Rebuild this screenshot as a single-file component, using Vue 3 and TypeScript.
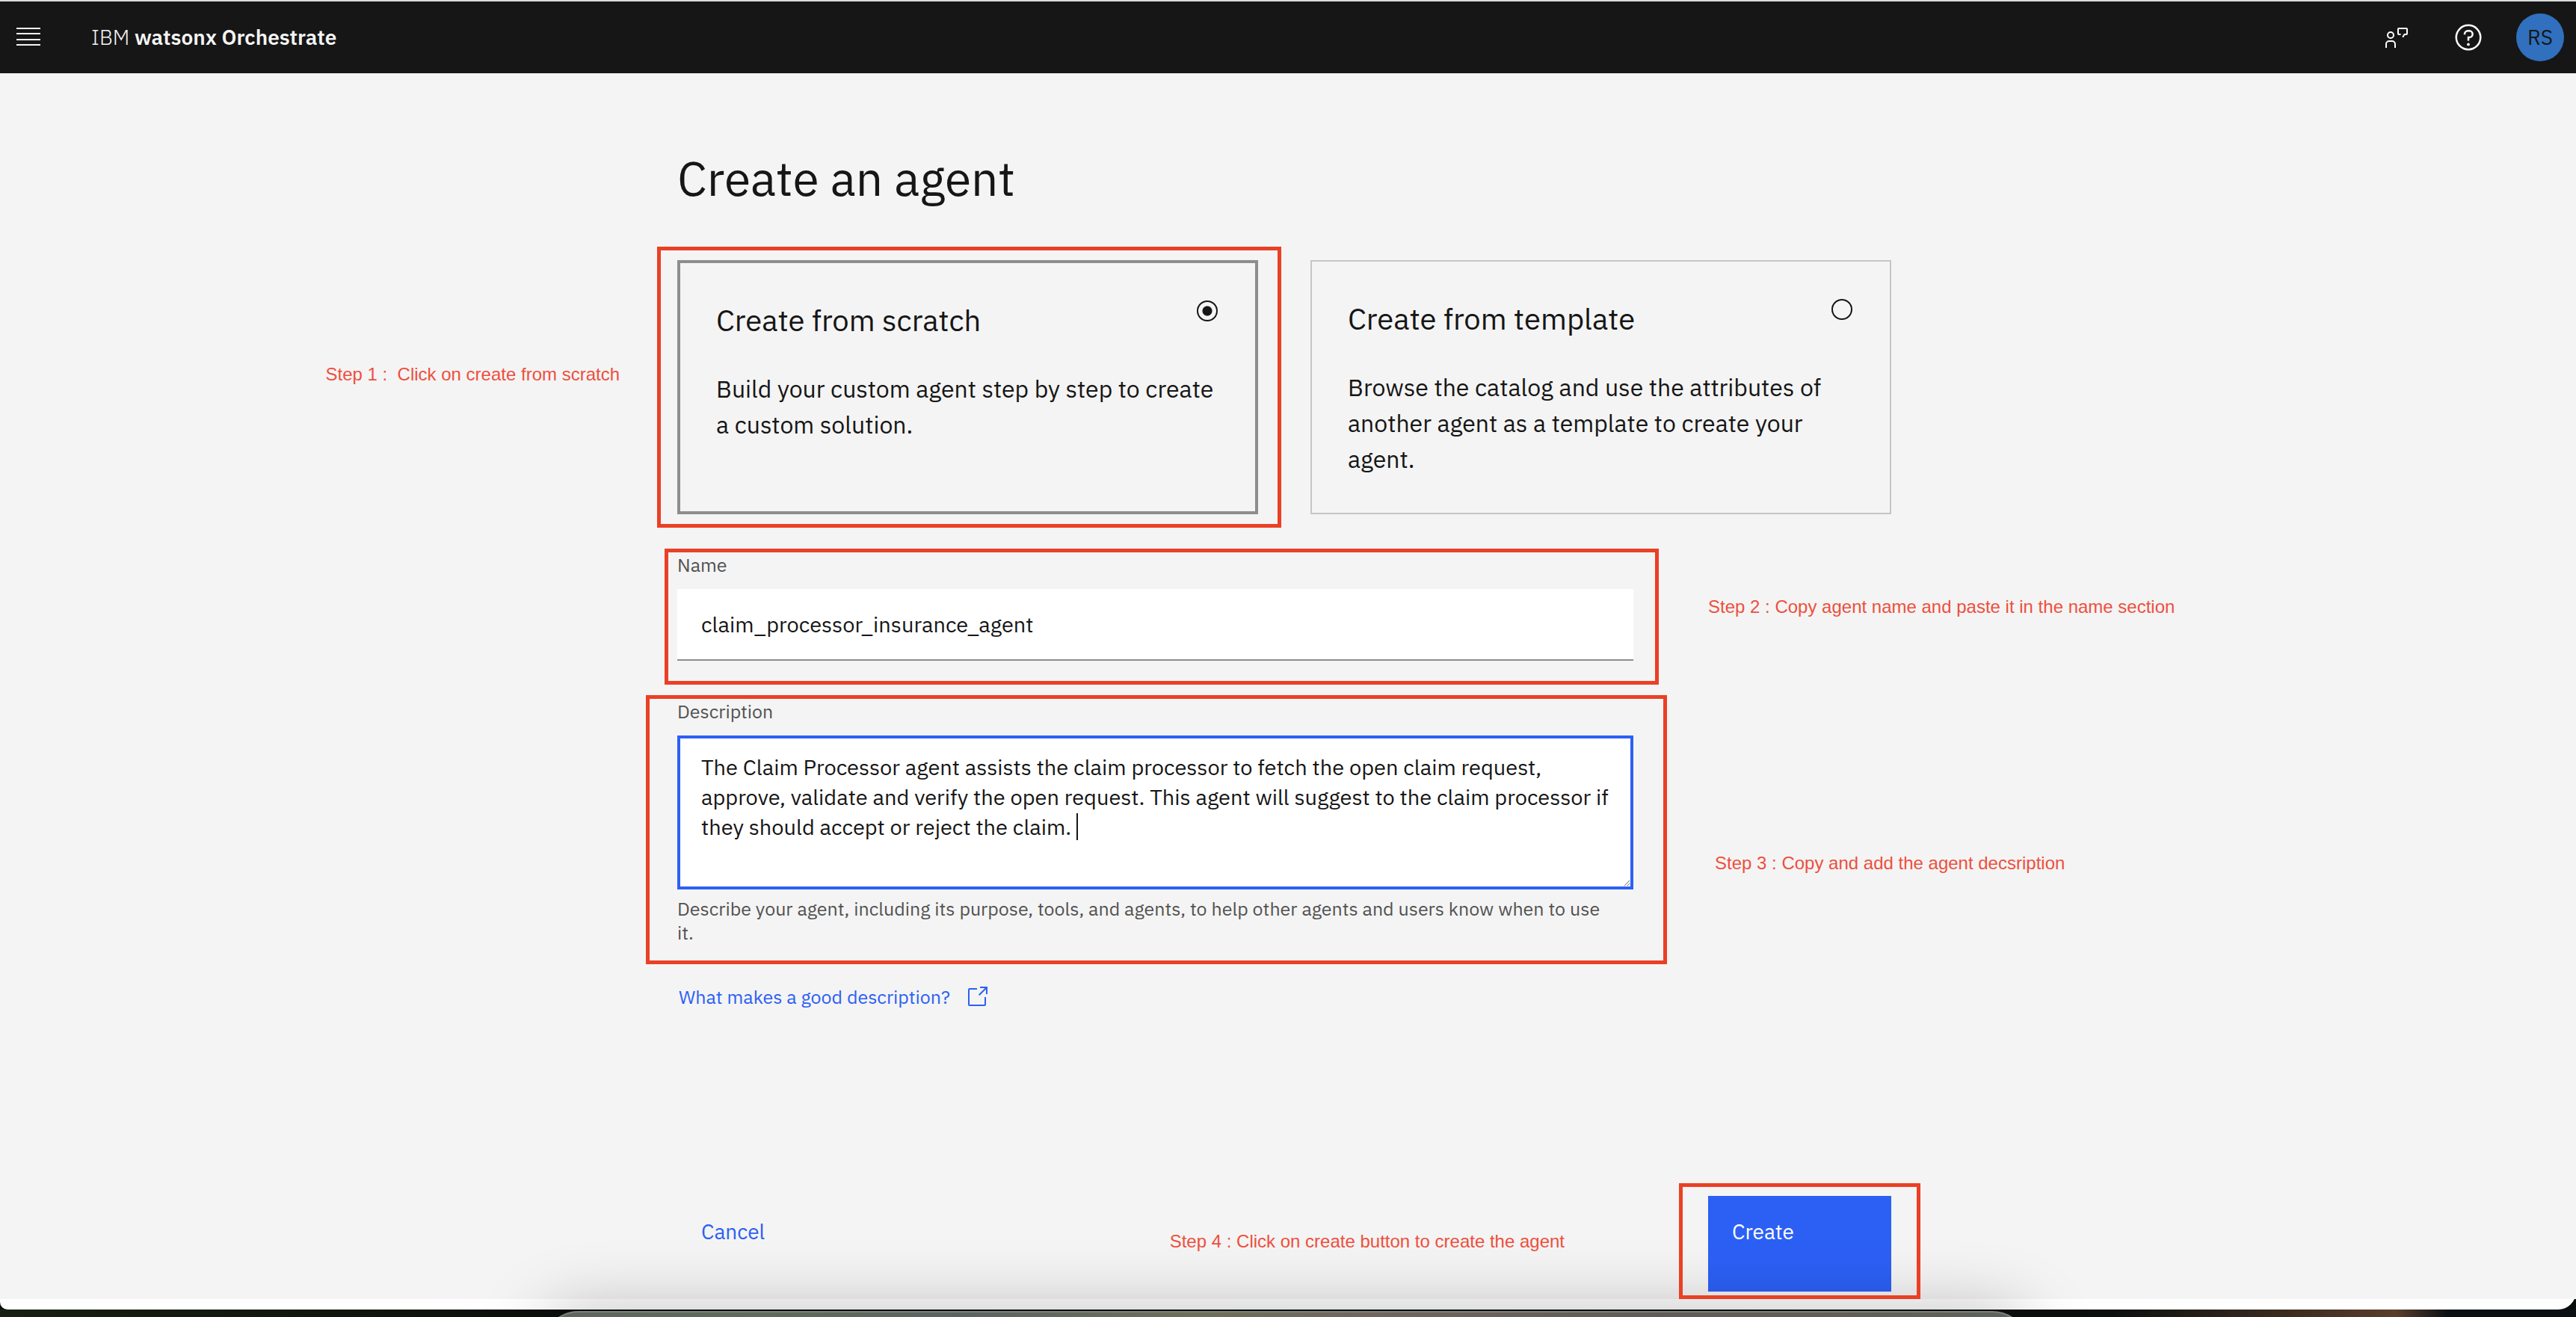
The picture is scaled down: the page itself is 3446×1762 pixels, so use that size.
<script setup lang="ts">
import { ref } from 'vue'

interface StartOption {
  id: string
  title: string
  text: string
}

const options: StartOption[] = [
  {
    id: 'scratch',
    title: 'Create from scratch',
    text: 'Build your custom agent step by step to create a custom solution.',
  },
  {
    id: 'template',
    title: 'Create from template',
    text: 'Browse the catalog and use the attributes of another agent as a template to create your agent.',
  },
]

const start = ref('scratch')
const agentName = ref('claim_processor_insurance_agent')
const description = ref(
  'The Claim Processor agent assists the claim processor to fetch the open claim request, approve, validate and verify the open request. This agent will suggest to the claim processor if they should accept or reject the claim. ',
)
</script>

<template>
  <div class="desktop">
    <div class="window">
      <header class="topbar">
        <button class="icon-button" type="button" aria-label="Menu">
          <svg width="32" height="32" viewBox="0 0 32 32" fill="#f4f4f4">
            <path d="M0 3h32v2H0zM0 10h32v2H0zM0 18h32v2H0zM0 25h32v2H0z" />
          </svg>
        </button>
        <a class="brand" href="#">IBM <b>watsonx Orchestrate</b></a>
        <div class="tools">
          <button class="icon-button" type="button" aria-label="Feedback">
            <svg width="32" height="32" viewBox="0 0 32 32" fill="none" stroke="#fff" stroke-width="2">
              <circle cx="8" cy="13" r="4" />
              <path d="M2 30v-5a4 4 0 0 1 4-4h4a4 4 0 0 1 4 4v5" />
              <path d="M21.5 12H19a1 1 0 0 1-1-1V5a1 1 0 0 1 1-1h10a1 1 0 0 1 1 1v6a1 1 0 0 1-1 1h-2.500l-2.300 3.800" />
            </svg>
          </button>
          <button class="icon-button" type="button" aria-label="Help">
            <svg width="40" height="40" viewBox="0 0 32 32" fill="#fff">
              <path d="M16,2A14,14,0,1,0,30,16,14,14,0,0,0,16,2Zm0,26A12,12,0,1,1,28,16,12,12,0,0,1,16,28Z" />
              <circle cx="16" cy="23.5" r="1.5" />
              <path d="M17,8H15.5A4.49,4.49,0,0,0,11,12.5V13h2v-.5A2.5,2.5,0,0,1,15.5,10H17a2.5,2.5,0,0,1,0,5H15v4.5h2V17a4.5,4.5,0,0,0,0-9Z" />
            </svg>
          </button>
          <button class="avatar" type="button">RS</button>
        </div>
      </header>

      <main class="page">
        <form class="content" @submit.prevent>
          <h1>Create an agent</h1>

          <div class="cards">
            <div v-for="option in options" :key="option.id" class="card-slot">
              <label class="card" :class="{ selected: start === option.id }">
                <span class="card-head">
                  <span class="card-title">{{ option.title }}</span>
                  <input v-model="start" type="radio" name="start" :value="option.id" />
                </span>
                <span class="card-text">{{ option.text }}</span>
              </label>
              <template v-if="option.id === 'scratch'">
                <span class="outline outline-card"></span>
                <span class="note note-1">Step 1 :&nbsp; Click on create from scratch</span>
              </template>
            </div>
          </div>

          <div class="field">
            <label for="agent-name">Name</label>
            <input id="agent-name" v-model="agentName" type="text" />
            <span class="outline outline-name"></span>
            <span class="note note-2">Step 2 : Copy agent name and paste it in the name section</span>
          </div>

          <div class="field">
            <label for="agent-description">Description</label>
            <div class="area">
              <textarea id="agent-description" v-model="description"></textarea>
              <span class="caret"></span>
            </div>
            <p class="helper">
              Describe your agent, including its purpose, tools, and agents, to help other agents and users know when to use it.
            </p>
            <span class="outline outline-description"></span>
            <span class="note note-3">Step 3 : Copy and add the agent decsription</span>
          </div>

          <a class="more" href="#">
            What makes a good description?
            <svg width="32" height="32" viewBox="0 0 32 32" fill="currentColor">
              <path d="M26,28H6a2,2,0,0,1-2-2V6A2,2,0,0,1,6,4H16V6H6V26H26V16h2V26A2,2,0,0,1,26,28Z" />
              <path d="M20 2v2h6.586L18 12.586 19.414 14 28 5.414V12h2V2z" />
            </svg>
          </a>

          <div class="actions">
            <button class="cancel" type="button">Cancel</button>
            <div class="create-slot">
              <button class="create" type="submit">Create</button>
              <span class="outline outline-create"></span>
              <span class="note note-4">Step 4 : Click on create button to create the agent</span>
            </div>
          </div>
        </form>
      </main>
    </div>
    <div class="wallpaper"><div class="dock"></div></div>
  </div>
</template>

<style>
body {
  margin: 0;
  background: #0b0f0c;
}
</style>

<style scoped>
* {
  box-sizing: border-box;
}

.desktop {
  display: flex;
  flex-direction: column;
  min-height: 100vh;
  overflow: hidden;
  background: #0b0f0c;
  color: #161616;
  font-family: "IBM Plex Sans", Roboto, sans-serif;
  font-size: 28px;
  line-height: 40px;
}

.window {
  display: flex;
  flex: 1;
  flex-direction: column;
  padding-bottom: 14px;
  border-top: 2px solid #d9dbdd;
  border-radius: 0 0 24px 10px;
  background: #fff;
}

button,
input,
textarea {
  margin: 0;
  border: 0;
  border-radius: 0;
  background: none;
  color: inherit;
  font: inherit;
}

.topbar {
  display: flex;
  align-items: center;
  height: 96px;
  padding: 0 16px 0 22px;
  background: #161616;
}

.icon-button {
  display: flex;
  padding: 0;
}

.brand {
  margin-left: 68px;
  color: #f4f4f4;
  font-weight: 300;
  text-decoration: none;
}

.brand b {
  font-weight: 600;
}

.tools {
  display: flex;
  align-items: center;
  margin-left: auto;
}

.tools .icon-button + .icon-button {
  margin: 0 44px 0 60px;
}

.avatar {
  width: 64px;
  height: 64px;
  padding: 0;
  border-radius: 50%;
  background: #3070be;
}

.page {
  display: flex;
  flex: 1;
  justify-content: center;
  padding: 100px 10px 10px 0;
  background: #f4f4f4;
}

.content {
  display: flex;
  flex: 0 1 1624px;
  flex-direction: column;
}

h1 {
  margin: 0 0 70px;
  font-size: 64px;
  font-weight: 400;
  line-height: 80px;
}

.cards {
  display: grid;
  grid-template-columns: 1fr 1fr;
  gap: 70px;
}

.card-slot,
.field,
.area,
.create-slot {
  position: relative;
}

.card-slot {
  display: flex;
}

.card {
  display: flex;
  flex: 1;
  flex-direction: column;
  gap: 40px;
  padding: 48px;
  border: 2px solid #c6c6c6;
}

.card.selected {
  border: 4px solid #8d8d8d;
}

.card-head {
  display: flex;
  align-items: flex-start;
  justify-content: space-between;
}

.card-title {
  font-size: 40px;
  line-height: 56px;
}

.card-text {
  font-size: 32px;
  line-height: 48px;
}

.card input {
  width: 28px;
  height: 28px;
  margin: 2px;
  appearance: none;
  border: 2px solid #161616;
  border-radius: 50%;
}

.card input:checked {
  background: radial-gradient(circle, #161616 6px, transparent 7px);
}

.field {
  display: flex;
  flex-direction: column;
  max-width: 1279px;
  margin-top: 52px;
}

.field label {
  margin-bottom: 16px;
  color: #525252;
  font-size: 25px;
  line-height: 32px;
}

.field input {
  height: 96px;
  padding: 0 32px;
  border-bottom: 2px solid #8d8d8d;
  background: #fff;
  font-size: 29px;
}

.area {
  display: flex;
}

textarea {
  flex: 1;
  height: 206px;
  padding: 18px 28px;
  border: 4px solid #2c60f5;
  outline: none;
  background: #fff;
  font-size: 29px;
  resize: vertical;
}

.caret {
  position: absolute;
  top: 104px;
  left: 534px;
  width: 2px;
  height: 36px;
  background: #161616;
}

.helper {
  margin: 10px 0 0;
  padding-right: 32px;
  color: #525252;
  font-size: 25px;
  line-height: 32px;
}

.more {
  display: flex;
  gap: 20px;
  align-self: flex-start;
  margin-top: 54px;
  padding-left: 2px;
  color: #2c60f5;
  font-size: 25px;
  line-height: 32px;
  text-decoration: none;
}

.actions {
  display: flex;
  justify-content: space-between;
  margin-top: auto;
}

.cancel,
.create {
  display: flex;
  align-items: flex-start;
  height: 128px;
  padding: 28px 32px;
}

.cancel {
  color: #2c60f5;
}

.create {
  width: 245px;
  background: #2c60f5;
  color: #fff;
}

.outline {
  position: absolute;
  z-index: 2;
  border: 5px solid #ea4025;
  pointer-events: none;
}

.outline-card {
  inset: -18px -31px -18px -27px;
}

.outline-name {
  inset: -6px -34px -32px -17px;
}

.outline-description {
  inset: -6px -45px -26px -42px;
}

.outline-create {
  inset: -17px -39px -10px -39px;
}

.note {
  position: absolute;
  z-index: 2;
  color: #ee4f3d;
  font-family: "Liberation Sans", Arial, sans-serif;
  font-size: 24px;
  line-height: 32px;
  white-space: nowrap;
}

.note-1 {
  top: 137px;
  right: calc(100% + 77px);
}

.note-2 {
  top: 56px;
  left: calc(100% + 100px);
}

.note-3 {
  top: 203px;
  left: calc(100% + 109px);
}

.note-4 {
  top: 45px;
  right: calc(100% + 192px);
}

.wallpaper {
  position: relative;
  height: 10px;
  background: linear-gradient(90deg, #18200f, #0b0f0c 22%, #0b100f 82%, #5a3d2a 93%, #0b1014 95%, #0b1014);
}

.dock {
  position: absolute;
  z-index: 1;
  top: 2px;
  right: 21.2%;
  left: 21%;
  height: 160px;
  border: 2px solid #7c817b;
  border-radius: 50px;
  background: linear-gradient(90deg, #5e6560, #5f6b57 15%, #5b6362 28%, #6d6f58 44%, #70665c 55%, #5f5b57 75%, #605f55 90%, #5e645e);
  box-shadow: 0 0 90px rgba(0, 0, 0, 0.25);
  pointer-events: none;
}
</style>
